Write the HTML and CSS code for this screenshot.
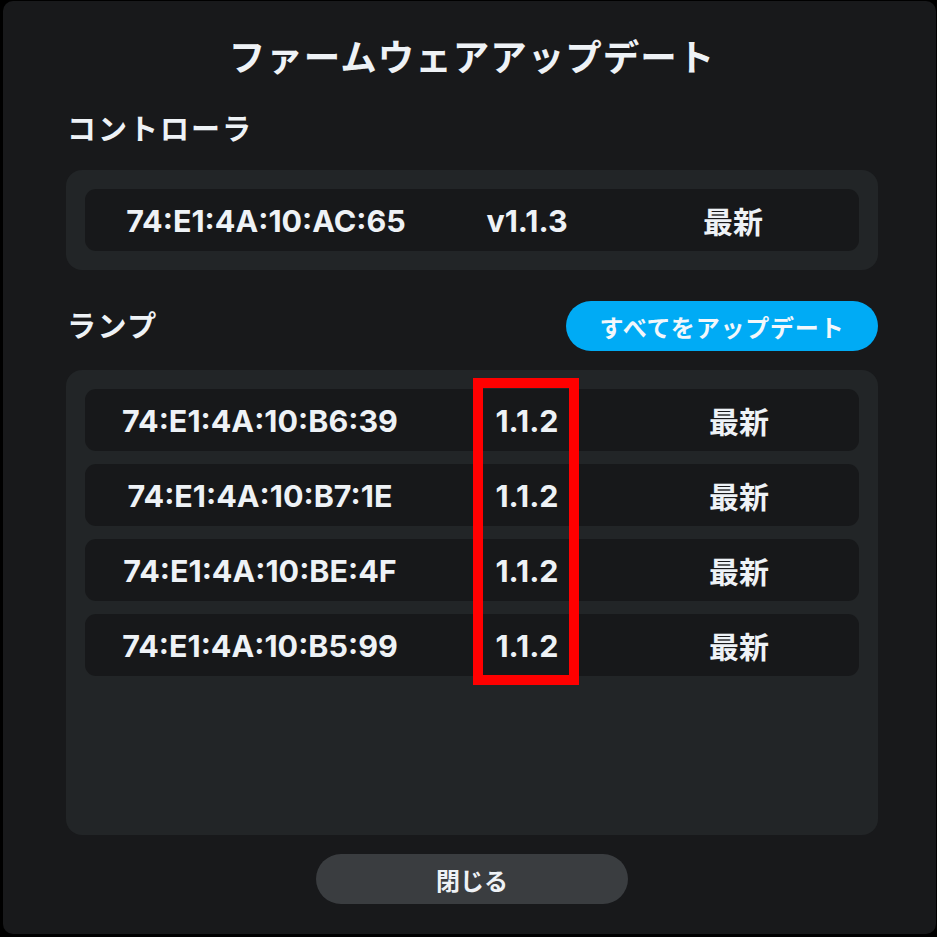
FILE: index.html
```html
<!DOCTYPE html>
<html lang="ja">
<head>
<meta charset="utf-8">
<title>ファームウェアアップデート</title>
<link rel="stylesheet" href="styles.css">
</head>
<body>
<div class="dialog">
  <h1 class="title">ファームウェアアップデート</h1>
  <div class="section-label">コントローラ</div>
  <div class="panel panel-controller">
    <div class="row row-controller">
      <span class="cell">74:E1:4A:10:AC:65</span>
      <span class="cell">v1.1.3</span>
      <span class="cell cjk">最新</span>
    </div>
  </div>
  <div class="lamp-header">
    <div class="section-label lamp-label">ランプ</div>
    <button class="btn-primary">すべてをアップデート</button>
  </div>
  <div class="panel panel-lamps">
    <div class="row row-lamp">
      <span class="cell">74:E1:4A:10:B6:39</span>
      <span class="cell">1.1.2</span>
      <span class="cell cjk">最新</span>
    </div>
    <div class="row row-lamp">
      <span class="cell">74:E1:4A:10:B7:1E</span>
      <span class="cell">1.1.2</span>
      <span class="cell cjk">最新</span>
    </div>
    <div class="row row-lamp">
      <span class="cell">74:E1:4A:10:BE:4F</span>
      <span class="cell">1.1.2</span>
      <span class="cell cjk">最新</span>
    </div>
    <div class="row row-lamp">
      <span class="cell">74:E1:4A:10:B5:99</span>
      <span class="cell">1.1.2</span>
      <span class="cell cjk">最新</span>
    </div>
  </div>
  <div class="footer">
    <button class="btn-close">閉じる</button>
  </div>
  <div class="highlight"></div>
</div>
</body>
</html>
```
FILE: styles.css
```css
* { box-sizing: border-box; }
html, body {
  margin: 0;
  padding: 0;
  background: #000;
}
body {
  width: 937px;
  height: 937px;
  overflow: hidden;
  font-family: Inter, "Noto Sans CJK JP", sans-serif;
  color: #eef2f6;
}
.dialog {
  position: relative;
  margin: 1px 0 0 3px;
  width: 933px;
  height: 933px;
  background: #18191b;
  border-radius: 10px;
  padding: 33px 58px 30px 63px;
  display: flex;
  flex-direction: column;
}
.title {
  margin: 0;
  height: 44px;
  line-height: 44px;
  font-family: "Noto Sans CJK JP", sans-serif;
  font-size: 36.5px;
  font-weight: 700;
  text-align: center;
  letter-spacing: 1px;
}
.section-label {
  margin-top: 29px;
  height: 40px;
  line-height: 40px;
  padding-left: 1px;
  font-family: "Noto Sans CJK JP", sans-serif;
  font-size: 29px;
  font-weight: 700;
  letter-spacing: 2px;
}
.panel {
  background: #222527;
  border-radius: 16px;
  padding: 19px;
  display: flex;
  flex-direction: column;
  gap: 13px;
}
.panel-controller { margin-top: 23px; }
.row {
  height: 62px;
  background: #17181a;
  border-radius: 11px;
  display: grid;
  align-items: center;
  font-size: 30.5px;
  font-weight: 700;
}
.cell {
  text-align: center;
  white-space: nowrap;
}
.cell.cjk {
  font-size: 30px;
}
.row-controller { grid-template-columns: 362px 160px 1fr; }
.row-lamp { grid-template-columns: 350px 184px 1fr; }
.lamp-header {
  margin-top: 31px;
  height: 50px;
  display: flex;
  align-items: center;
  justify-content: space-between;
}
.lamp-label {
  margin-top: -4px;
  letter-spacing: 1.5px;
}
.btn-primary {
  width: 312px;
  height: 50px;
  border: none;
  border-radius: 25px;
  background: #00abf5;
  color: #f2f7fb;
  font-family: "Noto Sans CJK JP", sans-serif;
  font-size: 24px;
  font-weight: 700;
  letter-spacing: 0.8px;
  padding: 0;
}
.panel-lamps {
  margin-top: 19px;
  height: 465px;
}
.footer {
  margin-top: 19px;
  display: flex;
  justify-content: center;
}
.btn-close {
  width: 312px;
  height: 50px;
  border: none;
  border-radius: 25px;
  background: #3a3d40;
  color: #eef2f6;
  font-family: "Noto Sans CJK JP", sans-serif;
  font-size: 24px;
  font-weight: 700;
  padding: 0;
}
.highlight {
  position: absolute;
  left: 470px;
  top: 377px;
  width: 106px;
  height: 307px;
  border: 10px solid #ff0000;
}
```
